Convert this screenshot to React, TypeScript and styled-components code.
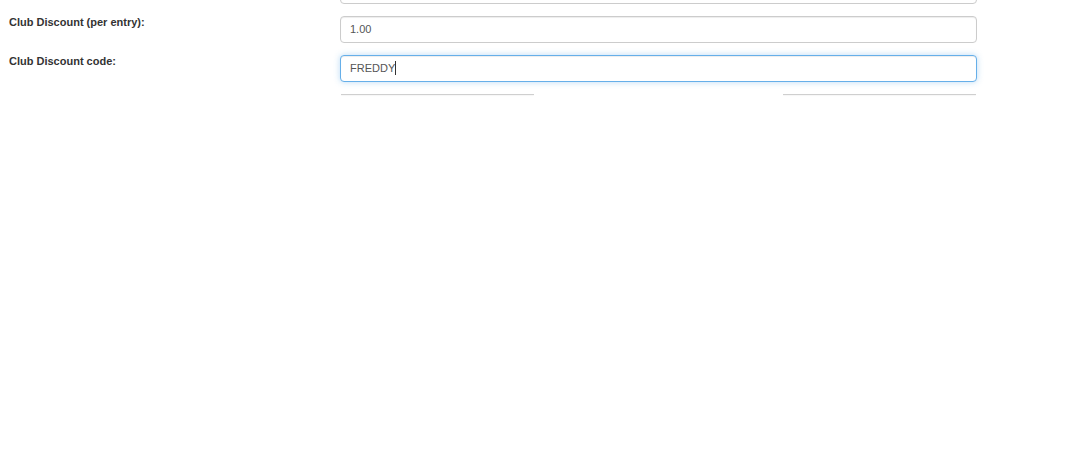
import React, { useEffect, useRef } from 'react'
import styled, { createGlobalStyle, css } from 'styled-components'

const GlobalStyle = createGlobalStyle`
  html, body {
    margin: 0;
    padding: 0;
    background: #fff;
  }
  body {
    font-family: "Liberation Sans", Arial, Helvetica, sans-serif;
    font-size: 11px;
    color: #333;
    overflow: hidden;
  }
`

const Page = styled.div`
  width: 1068px;
  height: 460px;
  overflow: hidden;
`

const Form = styled.form`
  margin-top: -23px;
  padding-left: 9px;
  width: 968px;
  display: flex;
  flex-direction: column;
  gap: 12px;
`

const Row = styled.div`
  display: grid;
  grid-template-columns: 331px 637px;
  align-items: start;
`

const Label = styled.label`
  font-weight: bold;
  font-size: 11px;
  line-height: 13px;
  padding-top: 0;
  color: #333;
`

const fieldText = css`
  font-family: "Liberation Sans", Arial, Helvetica, sans-serif;
  font-size: 11px;
`

const Input = styled.input<{ $focused?: boolean }>`
  ${fieldText};
  box-sizing: border-box;
  width: 637px;
  height: 27px;
  padding: 0 9px 1px;
  color: #555;
  caret-color: transparent;
  background: #fff;
  border: 1px solid #ccc;
  border-radius: 4px;
  box-shadow: inset 0 1px 1px rgba(0, 0, 0, 0.075);
  outline: none;

  ${({ $focused }) =>
    $focused &&
    css`
      border-color: #66afe9;
      box-shadow: inset 0 1px 1px rgba(0, 0, 0, 0.075), 0 0 6px rgba(102, 175, 233, 0.45);
    `}
`

const FieldWrap = styled.div`
  position: relative;
  width: 637px;
  height: 27px;
`

const CaretLayer = styled.div`
  ${fieldText};
  position: absolute;
  inset: 0;
  padding: 0 10px;
  display: flex;
  align-items: center;
  pointer-events: none;
`

const Ghost = styled.span`
  visibility: hidden;
  white-space: pre;
`

const Caret = styled.span`
  width: 1px;
  height: 14px;
  margin-top: -1px;
  background: #333;
`

const Dividers = styled.div`
  display: flex;
  justify-content: space-between;
  padding: 0 1px;
`

const Divider = styled.div`
  width: 193px;
  height: 1px;
  background: linear-gradient(180deg, #c8c8c8, #d6d6d6);
  box-shadow: 0 1px 1px rgba(0, 0, 0, 0.04);
`

const FocusedInput = ({ value }: { value: string }) => {
  const ref = useRef<HTMLInputElement>(null)

  useEffect(() => {
    const el = ref.current
    if (!el) return
    el.focus()
    el.setSelectionRange(value.length, value.length)
  }, [value])

  return (
    <FieldWrap>
      <Input ref={ref} $focused defaultValue={value} />
      <CaretLayer aria-hidden>
        <Ghost>{value}</Ghost>
        <Caret />
      </CaretLayer>
    </FieldWrap>
  )
}

export default function App() {
  return (
    <Page>
      <GlobalStyle />
      <Form onSubmit={e => e.preventDefault()}>
        <Row>
          <Label />
          <Input readOnly defaultValue="" tabIndex={-1} />
        </Row>
        <Row>
          <Label>Club Discount (per entry):</Label>
          <Input readOnly defaultValue="1.00" tabIndex={-1} />
        </Row>
        <Row>
          <Label>Club Discount code:</Label>
          <FocusedInput value="FREDDY" />
        </Row>
        <Row>
          <div />
          <Dividers>
            <Divider />
            <Divider />
          </Dividers>
        </Row>
      </Form>
    </Page>
  )
}
